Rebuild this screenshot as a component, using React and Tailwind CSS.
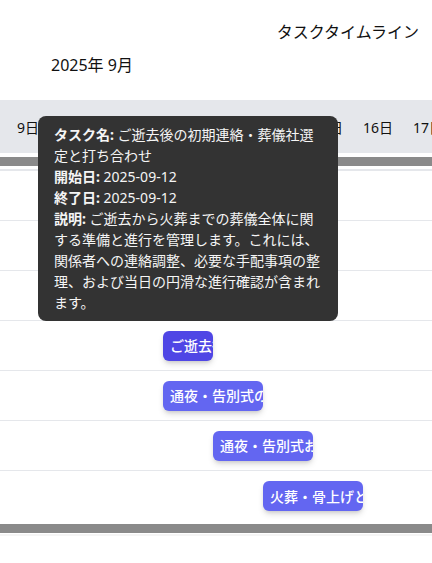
import React from "react";

const DAYS = [9, 10, 11, 12, 13, 14, 15, 16, 17];

// rows of the timeline; null = empty row (hidden under the tooltip)
const ROWS = [
  null,
  null,
  null,
  { pos: "ml-[163px] w-[50px]", color: "bg-[#4f46e5]", label: "ご逝去後の初期連絡・葬儀社選定と打ち合わせ" },
  { pos: "ml-[163px] w-[100px]", color: "bg-[#6366f1]", label: "通夜・告別式の準備" },
  { pos: "ml-[213px] w-[100px]", color: "bg-[#6366f1]", label: "通夜・告別式および会食の実施" },
  { pos: "ml-[263px] w-[100px]", color: "bg-[#6366f1]", label: "火葬・骨上げと精進落とし" },
];

export default function App() {
  return (
    <div className="relative w-[432px] h-[563px] overflow-hidden bg-white text-[#111] font-['Noto_Sans','Noto_Sans_CJK_JP',sans-serif]">
      {/* Title */}
      <div className="pt-[20px] flex justify-end pr-[13px] text-[16px] leading-[24px]">タスクタイムライン</div>
      <div className="mt-[9px] pl-[51px] text-[16px] leading-[24px]">2025年 9月</div>

      {/* Date header */}
      <div className="mt-[23px] h-[53px] bg-[#e5e7eb] flex items-center pl-[3px] overflow-hidden">
        {DAYS.map((d) => (
          <div key={d} className="w-[50px] shrink-0 text-center text-[14px] leading-[20px] pt-[3px]">
            {d}日
          </div>
        ))}
      </div>
      {/* header scrollbar */}
      <div className="h-[16px] pt-[4px] bg-white">
        <div className="h-[9px] bg-[#8a8a8a]" />
      </div>

      {/* Rows */}
      <div className="border-t-2 border-[#e5e7eb]">
        {ROWS.map((r, i) => (
          <div
            key={i}
            className={`h-[50px] flex items-center ${i < ROWS.length - 1 ? "border-b border-[#e5e7eb]" : ""}`}
          >
            {r && (
              <div
                className={`${r.pos} ${r.color} h-[30px] rounded-md shadow-md shadow-black/15 px-[7px] flex items-center overflow-hidden whitespace-nowrap text-white text-[14px] font-medium`}
              >
                {r.label}
              </div>
            )}
          </div>
        ))}
      </div>
      {/* body scrollbar */}
      <div className="h-[15px] pt-[3px] bg-white border-b-2 border-[#f5f5f5]">
        <div className="h-[9px] bg-[#8a8a8a]" />
      </div>

      {/* Tooltip */}
      <div className="absolute left-[38px] top-[116px] w-[300px] rounded-lg bg-[#333333] px-4 py-2 text-[14px] leading-[21px] text-[#f5f5f5]">
        <p>
          <span className="font-bold">タスク名:</span> ご逝去後の初期連絡・葬儀社選定と打ち合わせ
        </p>
        <p>
          <span className="font-bold">開始日:</span> 2025-09-12
        </p>
        <p>
          <span className="font-bold">終了日:</span> 2025-09-12
        </p>
        <p>
          <span className="font-bold">説明:</span> ご逝去から火葬までの葬儀全体に関する準備と進行を管理します。これには、関係者への連絡調整、必要な手配事項の整理、および当日の円滑な進行確認が含まれます。
        </p>
      </div>
    </div>
  );
}
